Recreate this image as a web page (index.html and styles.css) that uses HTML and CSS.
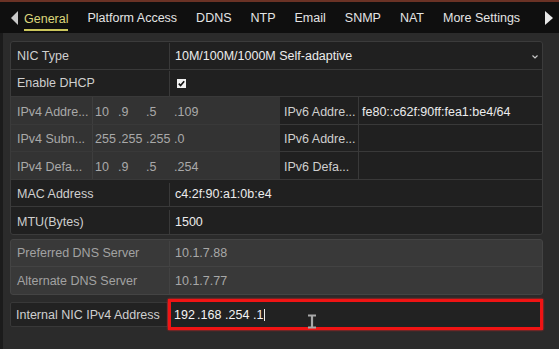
FILE: index.html
```html
<!DOCTYPE html>
<html lang="en">
<head>
<meta charset="UTF-8">
<title>Network - General</title>
<link rel="stylesheet" href="styles.css">
</head>
<body>
<div class="topline"></div>
<div class="tabs">
<svg class="arrow" width="7" height="14" viewBox="0 0 7 14"><polygon points="7,0 0,7 7,14" fill="#c9c9c9"/></svg>
<span class="tab active">General</span>
<span class="tab">Platform Access</span>
<span class="tab">DDNS</span>
<span class="tab">NTP</span>
<span class="tab">Email</span>
<span class="tab">SNMP</span>
<span class="tab">NAT</span>
<span class="tab">More Settings</span>
<svg class="arrow right" width="8" height="14" viewBox="0 0 8 14"><polygon points="0,0 8,7 0,14" fill="#e8e8e8"/></svg>
</div>

<div class="content">
<div class="group main">
<div class="row">
<div class="label">NIC Type</div>
<div class="value select">10M/100M/1000M Self-adaptive
<svg class="chev" width="6" height="4" viewBox="0 0 6 4"><polyline points="0.5,0.5 3,3 5.5,0.5" fill="none" stroke="#c8c8c8" stroke-width="1.2"/></svg>
</div>
</div>
<div class="row">
<div class="label">Enable DHCP</div>
<div class="value"><span class="check"><svg width="9" height="9" viewBox="0 0 9 9"><polyline points="1.8,4.6 3.6,6.6 7.2,2.2" fill="none" stroke="#111" stroke-width="1.6"/></svg></span></div>
</div>
<div class="row ip low">
<div class="v4 sublabel">IPv4 Addre...</div>
<div class="v4 subvalue"><span class="oct">10</span><span class="oct">.9</span><span class="oct">.5</span><span class="oct">.109</span></div>
<div class="v6 sublabel">IPv6 Addre...</div>
<div class="v6 subvalue">fe80::c62f:90ff:fea1:be4/64</div>
</div>
<div class="row ip low">
<div class="v4 sublabel">IPv4 Subn...</div>
<div class="v4 subvalue"><span class="oct">255</span><span class="oct">.255</span><span class="oct">.255</span><span class="oct">.0</span></div>
<div class="v6 sublabel">IPv6 Addre...</div>
<div class="v6 subvalue"></div>
</div>
<div class="row ip low">
<div class="v4 sublabel">IPv4 Defa...</div>
<div class="v4 subvalue"><span class="oct">10</span><span class="oct">.9</span><span class="oct">.5</span><span class="oct">.254</span></div>
<div class="v6 sublabel">IPv6 Defa...</div>
<div class="v6 subvalue"></div>
</div>
<div class="row low">
<div class="label">MAC Address</div>
<div class="value">c4:2f:90:a1:0b:e4</div>
</div>
<div class="row low">
<div class="label">MTU(Bytes)</div>
<div class="value">1500</div>
</div>
</div>

<div class="group dns">
<div class="row">
<div class="label">Preferred DNS Server</div>
<div class="value">10.1.7.88</div>
</div>
<div class="row">
<div class="label">Alternate DNS Server</div>
<div class="value">10.1.7.77</div>
</div>
</div>

<div class="nicrow">
<div class="niclabel">Internal NIC IPv4 Address</div>
<div class="nicinput">
<span class="oct">192</span><span class="oct">.168</span><span class="oct">.254</span><span class="oct last">.1</span><span class="caret"></span>
<svg class="ibeam" width="10" height="15" viewBox="0 0 10 15"><path d="M1,1.5 H9 M5,1.5 V13.5 M1,13.5 H9" fill="none" stroke="#a8a8a8" stroke-width="2.2"/></svg>
</div>
</div>
</div>
</body>
</html>
```

FILE: styles.css
```css
* {
margin: 0;
padding: 0;
box-sizing: border-box;
}
body {
background-color: #2b2b2b;
font-family: "Liberation Sans", Arial, sans-serif;
font-size: 12.5px;
color: #e6e6e6;
width: 559px;
height: 349px;
overflow: hidden;
}
.topline {
height: 2px;
background-color: #6a3225;
}
.tabs {
height: 31px;
background-color: #0f0f0f;
display: flex;
align-items: center;
gap: 19px;
padding-left: 11px;
padding-right: 6px;
}
.tabs .arrow {
margin-right: -13px;
}
.tabs .arrow.right {
margin-left: auto;
margin-right: 0;
}
.tab {
color: #e4e4e4;
line-height: 15px;
padding-top: 1px;
}
.tab.active {
color: #dcd77c;
border-bottom: 2px solid #cbc65c;
margin-top: 6px;
padding-bottom: 2px;
}

.content {
padding: 8px 16px 0 7px;
border-left: 3px solid #1b1b1b;
height: 316px;
}
.group {
border: 1px solid #3b3b3b;
border-radius: 3px;
overflow: hidden;
}
.main {
background-color: #202020;
}
.row {
display: flex;
height: 27.5px;
border-bottom: 1px solid #393939;
padding-top: 1px;
}
.row:last-child {
border-bottom: 0;
height: 26.5px;
}
.row.low {
padding-top: 3px;
}
.row.ip {
padding-top: 0;
}
.label {
width: 159px;
padding-left: 6px;
border-right: 1px solid #393939;
display: flex;
align-items: center;
color: #cfcfcf;
}
.value {
flex: 1;
padding-left: 5px;
display: flex;
align-items: center;
color: #ececec;
}
.select {
justify-content: space-between;
padding-right: 4px;
}
.chev {
margin-top: 3px;
}
.check {
width: 9px;
height: 9px;
background-color: #f0f0f0;
margin-left: 2px;
margin-top: 1px;
display: flex;
}

.ip .sublabel,
.ip .subvalue {
display: flex;
align-items: center;
padding-top: 3px;
}
.ip .v4 {
background-color: #333333;
color: #a9a9a9;
}
.ip .v4.sublabel {
width: 82px;
padding-left: 6px;
border-right: 1px solid #3e3e3e;
}
.ip .v4.subvalue {
width: 187px;
padding-left: 2px;
}
.ip .v6.sublabel {
width: 79px;
padding-left: 4px;
border-right: 1px solid #393939;
color: #cfcfcf;
}
.ip .v6.subvalue {
flex: 1;
padding-left: 3px;
color: #ececec;
}
.oct {
min-width: 26px;
margin-right: 2px;
}
.oct:first-child {
min-width: 21px;
}

.dns {
margin-top: 4px;
background-color: #393939;
border-color: #444;
}
.dns .label {
color: #a2a2a2;
border-right-color: #424242;
}
.dns .value {
color: #a8a8a8;
}
.dns .row {
border-bottom-color: #434343;
}

.nicrow {
display: flex;
align-items: center;
margin-top: 4px;
height: 31px;
}
.niclabel {
width: 158px;
height: 25px;
background-color: #222;
border: 1px solid #383838;
border-radius: 2px 0 0 2px;
padding-left: 5px;
padding-top: 1px;
display: flex;
align-items: center;
color: #cfcfcf;
}
.nicinput {
position: relative;
flex: 1;
height: 31px;
border: 3px solid #f01414;
box-shadow: 0 0 2px #ff2020;
background-color: #222;
display: flex;
align-items: center;
padding-left: 3px;
padding-top: 1px;
color: #f4f4f4;
}
.nicinput .oct.last {
min-width: 0;
margin-right: 1px;
}
.caret {
width: 1px;
height: 12px;
background-color: #eee;
}
.ibeam {
position: absolute;
left: 136px;
top: 12px;
}
```
